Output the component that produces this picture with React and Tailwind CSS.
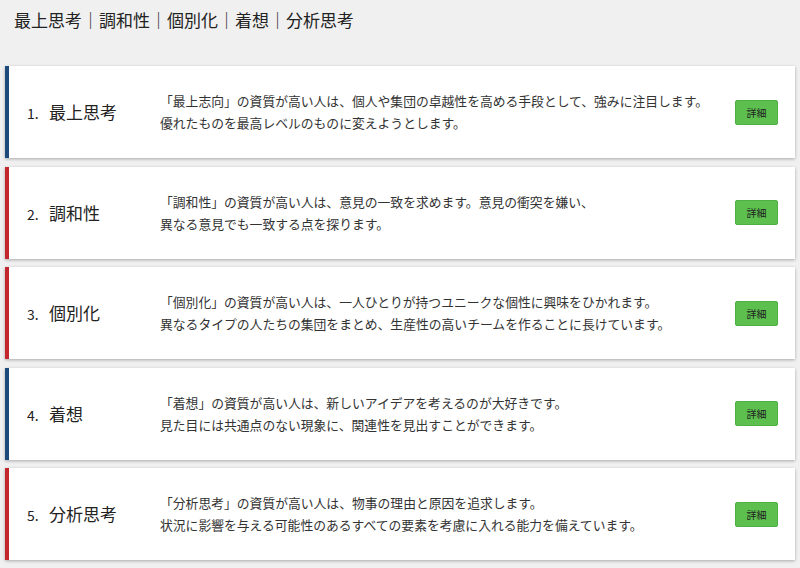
const items = [
    {
        no: 1,
        name: "最上思考",
        color: "border-l-[#1d4a7a]",
        lines: [
            "「最上志向」の資質が高い人は、個人や集団の卓越性を高める手段として、強みに注目します。",
            "優れたものを最高レベルのものに変えようとします。",
        ],
    },
    {
        no: 2,
        name: "調和性",
        color: "border-l-[#c1272d]",
        lines: [
            "「調和性」の資質が高い人は、意見の一致を求めます。意見の衝突を嫌い、",
            "異なる意見でも一致する点を探ります。",
        ],
    },
    {
        no: 3,
        name: "個別化",
        color: "border-l-[#c1272d]",
        lines: [
            "「個別化」の資質が高い人は、一人ひとりが持つユニークな個性に興味をひかれます。",
            "異なるタイプの人たちの集団をまとめ、生産性の高いチームを作ることに長けています。",
        ],
    },
    {
        no: 4,
        name: "着想",
        color: "border-l-[#1d4a7a]",
        lines: [
            "「着想」の資質が高い人は、新しいアイデアを考えるのが大好きです。",
            "見た目には共通点のない現象に、関連性を見出すことができます。",
        ],
    },
    {
        no: 5,
        name: "分析思考",
        color: "border-l-[#c1272d]",
        lines: [
            "「分析思考」の資質が高い人は、物事の理由と原因を追求します。",
            "状況に影響を与える可能性のあるすべての要素を考慮に入れる能力を備えています。",
        ],
    },
];

const font = { fontFamily: '"Noto Sans CJK JP", "Noto Sans", sans-serif' };

export default function App() {
    return (
        <div className="w-[800px] h-[568px] bg-[#f0f0f0] overflow-hidden" style={font}>
            <div className="h-[66px] pl-[14px] pt-[7px] text-[17px] text-[#222]">
                {items.map((it) => it.name).join("｜")}
            </div>
            <div className="flex flex-col gap-[8.5px] pl-[5px] pr-[5px]">
                {items.map((it) => (
                    <div
                        key={it.no}
                        className={`flex items-center h-[92px] bg-white border-l-4 ${it.color} shadow-[0_1px_3px_rgba(0,0,0,0.3)]`}
                    >
                        <div className="w-[151px] pl-[18px] text-[#222] flex items-baseline">
                            <span className="text-[14px] w-[22px]">{it.no}.</span>
                            <span className="text-[17px]">{it.name}</span>
                        </div>
                        <div className="flex-1 text-[12.8px] leading-[22px] text-[#333]">
                            {it.lines.map((l, i) => (
                                <div key={i}>{l}</div>
                            ))}
                        </div>
                        <button className="mr-[17px] w-[43px] h-[25px] rounded-[2px] bg-[#5cbf4e] border border-[#4fae44] text-[10px] text-[#222]">
                            詳細
                        </button>
                    </div>
                ))}
            </div>
        </div>
    );
}
